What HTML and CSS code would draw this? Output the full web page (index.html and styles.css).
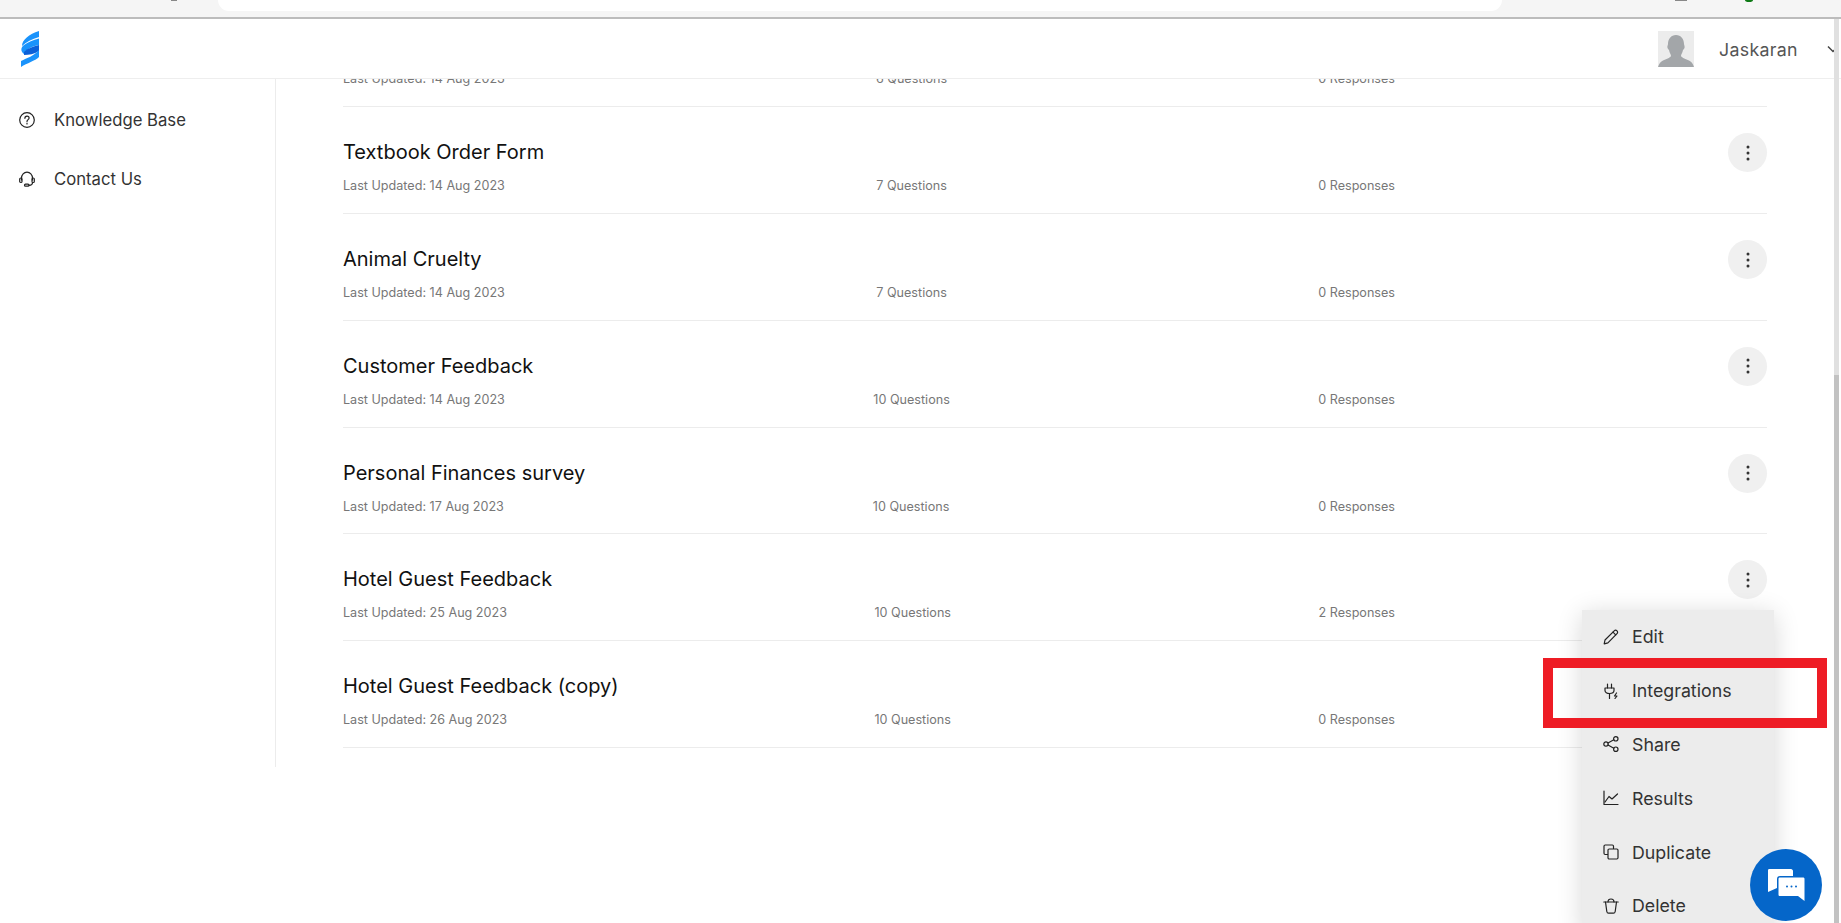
FILE: index.html
```html
<!DOCTYPE html>
<html lang="en">
<head>
<meta charset="utf-8">
<title>Forms</title>
<link rel="stylesheet" href="styles.css">
</head>
<body>
<div class="chrome">
  <div class="url-pill"></div>
  <span class="chrome-tick tick-a"></span>
  <span class="chrome-tick tick-b"></span>
  <span class="chrome-dot"></span>
</div>
<header class="topbar">
  <svg class="logo" viewBox="0 0 18 36" aria-label="logo">
    <path fill="#1a93fb" d="M18 0V6C11 8 5 11 1 15C1 9 8 3 18 0Z"/>
    <path fill="#1a93fb" d="M18 7.500V14C11 15 6 18 3 23C-1 20 0 16 3 14C7 11 12 9 18 7.500Z"/>
    <path fill="#0b60d8" d="M3 21C7 17 13 15 18 14C18.500 16 18.500 18 18 20C13 23 8 24 3 24Z"/>
    <path fill="#1a93fb" d="M18 19V26C14 30 6 32 0 36V30C6 27 13 25 18 19Z"/>
  </svg>
  <div class="user">
    <svg class="avatar" viewBox="0 0 36 36" aria-label="avatar">
      <rect width="36" height="36" fill="#ececec"/>
      <path fill="#a3a6a9" d="M18 4C23 4 26 8 26 13C26 14 27 15 26.500 17C26 18 25.500 18.500 25 19C24.500 22 23 23.500 23 25C24 27 28 28 31 29.500C34 31 35 33 36 36H0C1 33 2 31 5 29.500C8 28 12 27 13 25C13 23.500 11.500 22 11 19C10.500 18.500 10 18 9.500 17C9 15 10 14 10 13C10 8 13 4 18 4Z"/>
    </svg>
    <span class="user-name">Jaskaran</span>
    <svg class="chev" viewBox="0 0 12 8"><path d="M1 1.500L6 6.500L11 1.500" fill="none" stroke="#444" stroke-width="1.500"/></svg>
  </div>
</header>
<div class="main">
  <aside class="sidebar">
    <a class="nav-item">
      <svg class="ico" viewBox="0 0 16 16"><circle cx="8" cy="8" r="7.300"/><path d="M5.900 6.300C5.900 5 6.900 4.200 8 4.200C9.200 4.200 10.100 5 10.100 6.100C10.100 7.600 8 7.700 8 9.400"/><path d="M8 11.200V12"/></svg>
      <span>Knowledge Base</span>
    </a>
    <a class="nav-item">
      <svg class="ico" viewBox="0 0 16 16"><path d="M2.500 9V7.200C2.500 3.800 5 1.200 8 1.200C11 1.200 13.500 3.800 13.500 7.200V9"/><rect x="0.700" y="7" width="2.300" height="4.500" rx="1.100"/><rect x="13" y="7" width="2.300" height="4.500" rx="1.100"/><path d="M13.500 11.500C13.500 13.500 12 14.300 10 14.300"/><rect x="5.500" y="13.200" width="4.500" height="2" rx="1"/></svg>
      <span>Contact Us</span>
    </a>
  </aside>
  <main class="list">
    <div class="row row-clipped">
      <div class="row-body">
        <h2 class="row-title">Travel Survey</h2>
        <div class="row-meta"><span>Last Updated: 14 Aug 2023</span><span>6 Questions</span><span>0 Responses</span></div>
      </div>
    </div>
    <div class="row">
      <div class="row-body">
        <h2 class="row-title">Textbook Order Form</h2>
        <div class="row-meta"><span>Last Updated: 14 Aug 2023</span><span>7 Questions</span><span>0 Responses</span></div>
      </div>
      <button class="more"><svg viewBox="0 0 4 16"><circle cx="2" cy="2" r="1.500"/><circle cx="2" cy="8" r="1.500"/><circle cx="2" cy="14" r="1.500"/></svg></button>
    </div>
    <div class="row">
      <div class="row-body">
        <h2 class="row-title">Animal Cruelty</h2>
        <div class="row-meta"><span>Last Updated: 14 Aug 2023</span><span>7 Questions</span><span>0 Responses</span></div>
      </div>
      <button class="more"><svg viewBox="0 0 4 16"><circle cx="2" cy="2" r="1.500"/><circle cx="2" cy="8" r="1.500"/><circle cx="2" cy="14" r="1.500"/></svg></button>
    </div>
    <div class="row">
      <div class="row-body">
        <h2 class="row-title">Customer Feedback</h2>
        <div class="row-meta"><span>Last Updated: 14 Aug 2023</span><span>10 Questions</span><span>0 Responses</span></div>
      </div>
      <button class="more"><svg viewBox="0 0 4 16"><circle cx="2" cy="2" r="1.500"/><circle cx="2" cy="8" r="1.500"/><circle cx="2" cy="14" r="1.500"/></svg></button>
    </div>
    <div class="row">
      <div class="row-body">
        <h2 class="row-title">Personal Finances survey</h2>
        <div class="row-meta"><span>Last Updated: 17 Aug 2023</span><span>10 Questions</span><span>0 Responses</span></div>
      </div>
      <button class="more"><svg viewBox="0 0 4 16"><circle cx="2" cy="2" r="1.500"/><circle cx="2" cy="8" r="1.500"/><circle cx="2" cy="14" r="1.500"/></svg></button>
    </div>
    <div class="row">
      <div class="row-body">
        <h2 class="row-title">Hotel Guest Feedback</h2>
        <div class="row-meta"><span>Last Updated: 25 Aug 2023</span><span>10 Questions</span><span>2 Responses</span></div>
      </div>
      <button class="more"><svg viewBox="0 0 4 16"><circle cx="2" cy="2" r="1.500"/><circle cx="2" cy="8" r="1.500"/><circle cx="2" cy="14" r="1.500"/></svg></button>
    </div>
    <div class="row">
      <div class="row-body">
        <h2 class="row-title">Hotel Guest Feedback (copy)</h2>
        <div class="row-meta"><span>Last Updated: 26 Aug 2023</span><span>10 Questions</span><span>0 Responses</span></div>
      </div>
    </div>
  </main>
</div>

<nav class="menu">
  <a class="menu-item"><svg class="ico" viewBox="0 0 16 16"><path d="M1.200 14.800L2 11L11.200 1.800C12 1 13.200 1 14 1.800C14.800 2.600 14.800 3.800 14 4.600L4.900 13.900Z"/><path d="M10 3.200L12.700 5.900"/></svg><span>Edit</span></a>
  <a class="menu-item"><svg class="ico" viewBox="0 0 16 16"><path d="M4.500 1V5M8.500 1V5"/><path d="M2 5H11V7.500C11 9.500 9 10.500 6.500 10.500C4 10.500 2 9.500 2 7.500Z"/><path d="M6.500 10.500V15.500"/><path d="M13.500 10L11.500 13H14L12 15.500"/></svg><span>Integrations</span></a>
  <a class="menu-item"><svg class="ico" viewBox="0 0 16 16"><circle cx="3" cy="8" r="2.200"/><circle cx="12.800" cy="2.800" r="2.200"/><circle cx="12.800" cy="13.200" r="2.200"/><path d="M5 7L10.800 3.800M5 9L10.800 12.200"/></svg><span>Share</span></a>
  <a class="menu-item"><svg class="ico" viewBox="0 0 16 16"><path d="M1 1V14.500H15"/><path d="M2 12L6 6.500L9 9L14.500 4"/></svg><span>Results</span></a>
  <a class="menu-item"><svg class="ico" viewBox="0 0 16 16"><path d="M10.500 4.500V2.200C10.500 1.500 10 1 9.300 1H2.200C1.500 1 1 1.500 1 2.200V9.300C1 10 1.500 10.500 2.200 10.500H4.500"/><rect x="5" y="5" width="10" height="10" rx="1.200"/></svg><span>Duplicate</span></a>
  <a class="menu-item"><svg class="ico" viewBox="0 0 16 16"><path d="M0.800 4H15.200"/><path d="M5 4C5 2 6 1 8 1C10 1 11 2 11 4"/><path d="M2.500 4L3.800 13.500C4 14.500 4.600 15.200 5.500 15.200H10.500C11.400 15.200 12 14.500 12.200 13.500L13.500 4"/></svg><span>Delete</span></a>
</nav>

<div class="highlight"></div>

<button class="chat">
  <svg viewBox="0 0 38 32" aria-label="chat">
    <path fill="#fff" d="M2 0H24C25 0 26 1 26 2V7H13C11 7 10 8 10 10V19L1 23V2C1 1 1 0 2 0Z"/>
    <path fill="#fff" d="M13 8.500H36C37 8.500 37.500 9 37.500 10V32L31 27H13C12 27 11.500 26.500 11.500 25.500V10C11.500 9 12 8.500 13 8.500Z"/>
    <circle fill="#0566c9" cx="20" cy="17.500" r="1"/><circle fill="#0566c9" cx="24.500" cy="17.500" r="1"/><circle fill="#0566c9" cx="29" cy="17.500" r="1"/>
  </svg>
</button>

<div class="scrollbar"><div class="scroll-track"></div><div class="scroll-thumb"></div></div>
</body>
</html>
```
FILE: styles.css
```css
* { box-sizing: border-box; }
html, body { margin: 0; height: 100%; }
body {
  position: relative;
  overflow: hidden;
  background: #fff;
  font-family: "Inter", "Liberation Sans", sans-serif;
  color: #333;
}

/* browser chrome remnant */
.chrome {
  position: relative;
  height: 19px;
  background: #f5f5f5;
  border-bottom: 2px solid #bcbcbc;
  padding-left: 218px;
  overflow: hidden;
}
.url-pill {
  width: 1284px;
  height: 11px;
  background: #fff;
  border-radius: 0 0 20px 20px;
}
.chrome-tick { position: absolute; top: 0; height: 1px; background: #888; }
.tick-a { left: 171px; width: 6px; }
.tick-b { left: 1675px; width: 12px; }
.chrome-dot {
  position: absolute;
  top: -2px;
  left: 1745px;
  width: 8px;
  height: 4px;
  border-radius: 50%;
  background: #0f7a16;
}

/* header */
.topbar {
  height: 60px;
  display: flex;
  align-items: center;
  justify-content: space-between;
  padding-left: 21px;
  border-bottom: 1px solid #eee;
  position: relative;
  z-index: 2;
  background: #fff;
}
.logo { width: 18px; height: 36px; margin-top: 1px; }
.user { display: flex; align-items: center; width: 183px; flex: none; margin-top: 1px; }
.avatar { width: 36px; height: 36px; flex: none; }
.user-name { margin-left: 25px; font-size: 17.800px; letter-spacing: 0.300px; color: #555; width: 110px; flex: none; }
.chev { width: 12px; height: 8px; flex: none; margin-left: -2px; }

/* layout */
.main { display: flex; height: 844px; overflow: hidden; }
.sidebar {
  width: 276px;
  height: 688px;
  flex: none;
  border-right: 1px solid #ececec;
  padding: 11px 0 0 19px;
}
.nav-item {
  display: flex;
  align-items: center;
  gap: 19px;
  height: 59px;
  font-size: 16.700px;
  color: #333;
}
.ico {
  width: 16px;
  height: 16px;
  flex: none;
  fill: none;
  stroke: #222;
  stroke-width: 1.200;
  stroke-linecap: round;
  stroke-linejoin: round;
}

/* list */
.list { width: 1491px; padding-left: 67px; flex: none; }
.row {
  height: 106.800px;
  display: flex;
  align-items: flex-start;
  padding-top: 30px;
  border-bottom: 1px solid #ececec;
}
.row-clipped { margin-top: -78.600px; }
.row-body { flex: 1; min-width: 0; }
.row-title {
  margin: 0;
  font-size: 20px;
  font-weight: 400;
  line-height: 30px;
  color: #111;
}
.row-meta {
  width: 1052px;
  margin-top: 9px;
  display: flex;
  justify-content: space-between;
  font-size: 12.600px;
  line-height: 20px;
  color: #777;
}
.more {
  flex: none;
  width: 39px;
  height: 39px;
  margin-top: -4px;
  border: 0;
  padding: 0;
  border-radius: 50%;
  background: #f0f0f0;
  display: flex;
  align-items: center;
  justify-content: center;
}
.more svg { width: 4px; height: 16px; fill: #333; }

/* overlays */
.menu {
  position: absolute;
  left: 1582px;
  top: 610px;
  width: 192px;
  background: #ececec;
  box-shadow: 0 4px 24px rgba(0, 0, 0, 0.160);
  z-index: 3;
}
.menu-item {
  display: flex;
  align-items: center;
  gap: 13px;
  height: 53.800px;
  padding-left: 21px;
  font-size: 17.800px;
  color: #333;
}
.highlight {
  position: absolute;
  left: 1543px;
  top: 658px;
  width: 284px;
  height: 70px;
  border: 10px solid #ee1c25;
  z-index: 4;
}
.chat {
  position: absolute;
  left: 1750px;
  top: 849px;
  width: 72px;
  height: 72px;
  border: 0;
  padding: 0;
  border-radius: 50%;
  background: #0566c9;
  display: flex;
  align-items: center;
  justify-content: center;
  z-index: 5;
}
.chat svg { width: 38px; height: 32px; }
.scrollbar {
  position: absolute;
  left: 1834px;
  top: 19px;
  bottom: 0;
  width: 5px;
  display: flex;
  flex-direction: column;
  z-index: 6;
}
.scroll-track { height: 356px; flex: none; background: #e0e0e0; }
.scroll-thumb { flex: 1; background: #c2c2c2; }
```
